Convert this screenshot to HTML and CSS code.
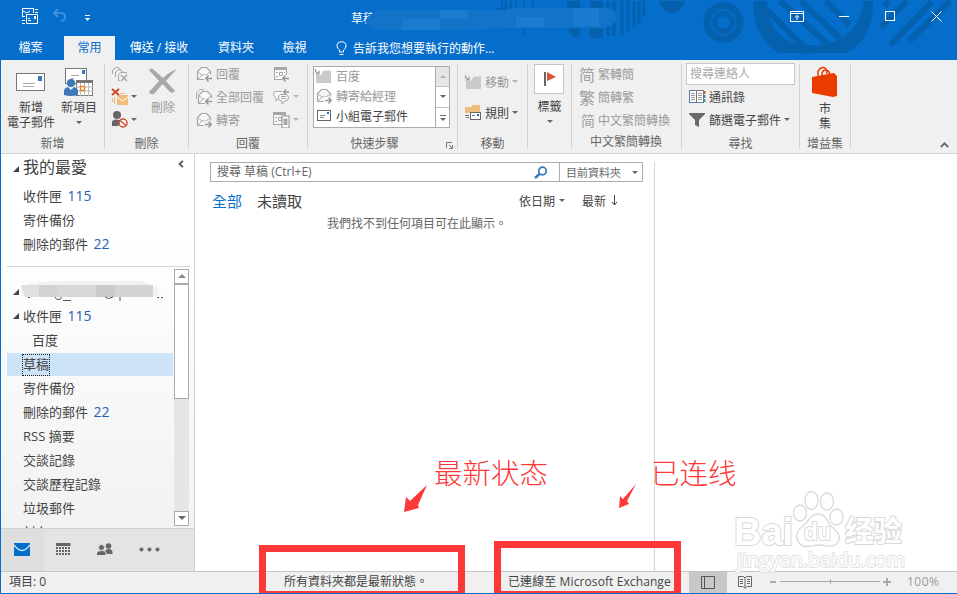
FILE: index.html
```html
<!DOCTYPE html>
<html lang="zh-Hant">
<head>
    <meta charset="UTF-8">
    <meta name="viewport" content="width=device-width, initial-scale=1.0">
    <title>草稿 - Outlook</title>
    <link rel="stylesheet" href="styles.css">
</head>
<body>
    <!-- shared icons -->
    <svg class="defs" width="0" height="0">
        <symbol id="i-open-mail" viewBox="0 0 18 16">
            <path d="M8 13.500H1.500V5.500L5.500 1.500H10.500L14.500 5.500V8.500" fill="#f8f8f8" stroke="#a6a6a6" stroke-width="1.200"/>
            <path d="M1.500 5.500L6 9H10L14.500 5.500M2 13L6 9" fill="none" stroke="#b0b0b0"/>
        </symbol>
        <symbol id="i-back" viewBox="0 0 7 7"><path d="M7 3.500H1M3.500 .5L.8 3.500 3.500 6.500" fill="none" stroke="#999" stroke-width="1.5"/></symbol>
        <symbol id="i-folder" viewBox="0 0 18 16">
            <path d="M2 7L7 7 9 3.500 10 2.500H17V15H2Z" fill="#c9c9c9"/>
            <path d="M1.500 1V3.500L5 6M5 2.500V6H1.500" fill="none" stroke="#9a9a9a" stroke-width="1.2"/>
        </symbol>
        <symbol id="i-cal" viewBox="0 0 16 14">
            <rect x=".5" y=".5" width="12" height="12" fill="#f8f8f8" stroke="#a6a6a6"/>
            <rect x="0" y="0" width="13" height="3" fill="#a6a6a6"/>
            <path d="M2 5.500H4M2 9.500H4M10 5.500H11M5.500 5.500H8.500V8.500H5.500Z" fill="none" stroke="#a6a6a6"/>
        </symbol>
    </svg>

    <div class="window">
        <header class="top">
            <svg class="art" width="957" height="60" viewBox="0 0 957 60">
                <g fill="none" stroke="#0560ae">
                    <path d="M502 1V15M506 1V15M511 1V15M516 1V18M524 1V34M533 1V15" stroke-width="2"/>
                    <path d="M567 1H580V37H573Q567 30 567 20Z" fill="#0560ae" stroke="none"/>
                    <path d="M590 1H603V38H590ZM497 8H505V23H497Z" fill="#0560ae" stroke="none"/>
                    <path d="M608 1V36M614 1V36M622 1V34M628 1V31M634 1V27M639 1V23M644 1V16" stroke-width="3"/>
                    <path d="M659 1Q663 13 672 13T685 1Z" fill="#0560ae" stroke="none"/>
                    <circle cx="723.500" cy="22.500" r="16.500" stroke-width="7"/>
                    <circle cx="723.500" cy="22.500" r="9" stroke-width="5"/>
                    <path d="M753 1H767Q767 26 785 39L779 53Q753 38 753 1Z" fill="#0560ae" stroke="none"/>
                    <path d="M864 1H873Q874 37 847 53H779L785 39Q806 49 831 43Q861 32 864 1Z" fill="#0560ae" stroke="none"/>
                    <path d="M758 1L810 53M780 1L832 48M801 1L840 38M826 1L850 25" stroke-width="6"/>
                    <path d="M890 45L932 2M909 41L950 1M881 27L907 1M884 6L889 1" stroke-width="6"/>
                </g>
            </svg>

            <div class="titlebar">
                <div class="quick-access">
                    <svg width="18" height="18" viewBox="0 0 18 18" fill="none" stroke="#fff">
                        <path d="M1 1.500H12M1.500 1V9M1 9.500H4M12.500 1V6M14 2.500H17M14 5.500H17M1 13.500H4M1 16.500H4M2 4L6 6 9 4"/>
                        <path d="M5.500 7.500H16.500V16.500H5.500ZM7 13.500H10M7 11.500H9"/><path d="M13 9H15V12H13Z" fill="#fff" stroke="none"/>
                    </svg>
                    <svg class="undo" width="15" height="14" viewBox="0 0 15 14" fill="none" stroke="#3d8fdc" stroke-width="2">
                        <path d="M6 1L2 5 6 9M2 5H9Q13 5 13 9T9 13"/>
                    </svg>
                    <svg class="customize" width="7" height="6" viewBox="0 0 7 6"><path d="M1 .5H6" stroke="#fff"/><path d="M1 3H6L3.500 6Z" fill="#fff"/></svg>
                </div>
                <span class="title">草稿</span>
                <!-- redacted account name -->
                <svg class="smudge" width="252" height="22" viewBox="0 0 252 22">
                    <path d="M12 2H108Q138 3 153 0H238Q251 -1 252 8T238 20H138Q118 22 98 22H16Q4 19 1 15T12 2Z" fill="#1273c9"/>
                    <path d="M37 11H75V22H37ZM75 2H103V11H75ZM151 9H179V19H151ZM208 0H234V18H208Z" fill="#1b7bd0"/>
                </svg>
                <div class="window-buttons">
                    <svg width="14" height="11" viewBox="0 0 14 11" fill="none" stroke="#fff"><path d="M.5 .5H13.500V10.500H.5ZM.5 2.500H13.500M7 9V4.500M4.800 6.500L7 4.500 9.200 6.500"/></svg>
                    <svg width="11" height="11" viewBox="0 0 11 11" stroke="#fff"><path d="M0 5.500H10"/></svg>
                    <svg width="11" height="11" viewBox="0 0 11 11" fill="none" stroke="#fff"><rect x=".5" y=".5" width="9" height="9"/></svg>
                    <svg width="11" height="11" viewBox="0 0 11 11" stroke="#fff"><path d="M.5 .5L10.500 10.500M10.500 .5L.5 10.500"/></svg>
                </div>
            </div>

            <nav class="tabs">
                <a class="tab file">檔案</a>
                <a class="tab active">常用</a>
                <a class="tab send">傳送 / 接收</a>
                <a class="tab folder">資料夾</a>
                <a class="tab view">檢視</a>
                <a class="tell-me">
                    <svg width="11" height="15" viewBox="0 0 11 15" fill="none" stroke="#fff"><path d="M3.500 11V9Q1 7.500 1 5Q1 .8 5.500 .8T10 5Q10 7.500 7.500 9V11ZM3.500 13.500H7.500"/></svg>
                    告訴我您想要執行的動作...
                </a>
            </nav>
        </header>

        <section class="ribbon">
            <div class="group g-new">
                <div class="group-body">
                    <div class="big new-mail">
                        <svg width="30" height="30" viewBox="0 0 30 30"><rect x=".5" y="9.500" width="28" height="17" fill="#fff" stroke="#777"/><rect x="22" y="12" width="4" height="5" fill="#3e78b8"/><path d="M7 19.500H19M7 22.500H18" stroke="#aaa"/></svg>
                        <span>新增<br>電子郵件</span>
                    </div>
                    <div class="big new-item">
                        <svg width="30" height="32" viewBox="0 0 30 32">
                            <rect x="1.500" y="4.500" width="21" height="15" fill="#fff" stroke="#777"/><path d="M18 6H21V10H18Z" fill="#3e78b8"/><path d="M7 11.500H15M7 14.500H10" stroke="#aaa"/>
                            <rect x="12.500" y="16.500" width="16" height="15" fill="#fff" stroke="#777"/><path d="M12 16H29V19H12Z" fill="#777"/><path d="M16.500 19V32M20.500 19V32M24.500 19V32M12 23H29M12 27H29" stroke="#bbb"/>
                            <rect x="16.500" y="22.500" width="4" height="4" fill="#fff" stroke="#e38b2c" stroke-width="1.5"/>
                            <circle cx="7" cy="19" r="4" fill="#3e78b8"/><path d="M0 31V27Q0 24 4 23L7 26 10 23Q14 24 14 27V31Q7 33 0 31Z" fill="#3e78b8"/>
                        </svg>
                        <span>新項目</span>
                        <i class="caret"></i>
                    </div>
                </div>
                <div class="group-label">新增</div>
            </div>

            <div class="group g-delete">
                <div class="group-body">
                    <div class="stack">
                        <div class="row"><svg width="18" height="16" viewBox="0 0 18 16" fill="none" stroke="#aaa"><path d="M1.500 8V4L5 1.500H7L10 4M4.500 11V6L8 3.500 12 6M9 14.500H7.500V8.500L10 6.500H15.500V8"/><path d="M10 9L16 15M16 9L10 15" stroke-width="1.700"/></svg></div>
                        <div class="row">
                            <svg width="18" height="17" viewBox="0 0 18 17"><path d="M6 7H17V17H6Z" fill="#f0bd7c"/><path d="M6 9L11.500 13 17 9" stroke="#fff" fill="none"/><path d="M1.500 10V14M3.500 9V16M9 5.500H14" stroke="#e8b880"/><path d="M1 1L8 7M8 1L1 7" stroke="#cf4a2b" stroke-width="2"/></svg>
                            <i class="caret"></i>
                        </div>
                        <div class="row">
                            <svg width="18" height="17" viewBox="0 0 18 17"><circle cx="6" cy="4" r="4" fill="#666"/><path d="M1 15V11Q1 9 5 8.500Q9 8.500 10 10L7 15Z" fill="#666"/><circle cx="12" cy="12" r="4" fill="#fff" stroke="#cf4a2b" stroke-width="1.500"/><path d="M9 9.500L15 14.500" stroke="#cf4a2b" stroke-width="1.500"/></svg>
                            <i class="caret"></i>
                        </div>
                    </div>
                    <div class="big delete disabled">
                        <svg width="30" height="32" viewBox="0 0 30 32"><path d="M1 6Q3 3 6 6L15 14Q21 8 29 5Q23 11 18 17L27 27Q25 30 22 28L14.500 20 6 30Q2 31 1 28L11 17Z" fill="#a8a8a8"/></svg>
                        <span>刪除</span>
                    </div>
                </div>
                <div class="group-label">刪除</div>
            </div>

            <div class="group g-reply">
                <div class="group-body disabled">
                    <div class="stack replies">
                        <div class="row"><svg width="17" height="16" viewBox="0 0 17 16"><use href="#i-open-mail" width="18" height="16"/><path d="M8 9H17V16H8Z" fill="#f0f0f0"/><use href="#i-back" x="9" y="9" width="7" height="7"/></svg>回覆</div>
                        <div class="row"><svg width="17" height="16" viewBox="0 0 17 16"><path d="M.5 10V4L4 .5H8" fill="none" stroke="#aaa"/><use href="#i-open-mail" x="1" y="1" width="18" height="16"/><path d="M9 9H17V16H9Z" fill="#f0f0f0"/><use href="#i-back" x="9" y="9" width="7" height="7"/></svg>全部回覆</div>
                        <div class="row"><svg width="17" height="16" viewBox="0 0 17 16"><use href="#i-open-mail" width="18" height="16"/><path d="M8 9H17V16H8Z" fill="#f0f0f0"/><use href="#i-back" x="-16" y="9" width="7" height="7" transform="scale(-1 1)"/></svg>轉寄</div>
                    </div>
                    <div class="stack">
                        <div class="row"><svg width="17" height="16" viewBox="0 0 17 16"><use href="#i-cal" x="1" y="1" width="16" height="14"/><path d="M9 9H16V16H9Z" fill="#f0f0f0"/><use href="#i-back" x="9" y="9" width="7" height="7"/></svg></div>
                        <div class="row"><svg width="17" height="16" viewBox="0 0 17 16" fill="#f8f8f8" stroke="#a6a6a6"><path d="M9 2.500H3Q.5 2.500 .5 5T3 9V12L6 9"/><path d="M7 5.500H13Q15.500 6 15.500 9T12 12L9 15V12Q5.500 12 5.500 9T7 5.500ZM8 7.500H13M8 9.500H13"/><use href="#i-back" x="10" y="0" width="6" height="6"/></svg><i class="caret"></i></div>
                        <div class="row"><svg width="17" height="16" viewBox="0 0 17 16"><use href="#i-cal" width="16" height="14"/><rect x="9" y="4" width="7" height="12" fill="#fff" stroke="#8a8a8a"/><path d="M10.500 6.500H14.500V13H10.500Z" fill="#a6a6a6"/></svg><i class="caret"></i></div>
                    </div>
                </div>
                <div class="group-label">回覆</div>
            </div>

            <div class="group g-steps">
                <div class="group-body">
                    <div class="gallery">
                        <div class="gallery-list">
                            <div class="row disabled"><svg width="18" height="16"><use href="#i-folder"/></svg>百度</div>
                            <div class="row disabled"><svg width="18" height="16" viewBox="0 0 18 16"><use href="#i-open-mail" x="2" width="18" height="16"/><path d="M10 9H18V16H10Z" fill="#fff"/><use href="#i-back" x="-18" y="9" width="7" height="7" transform="scale(-1 1)"/></svg>轉寄給經理</div>
                            <div class="row"><svg width="18" height="16" viewBox="0 0 18 16"><rect x="3.500" y="2.500" width="13" height="10" fill="#fff" stroke="#666"/><path d="M13 4H15V6H13Z" fill="#2f6fb5"/><path d="M6 7.500H11M6 9.500H10" stroke="#888"/></svg>小組電子郵件</div>
                        </div>
                        <div class="gallery-scroll">
                            <span class="off"><i class="caret up"></i></span>
                            <span><i class="caret"></i></span>
                            <span><i class="caret lined"></i></span>
                        </div>
                    </div>
                </div>
                <div class="group-label">快速步驟
                    <svg class="launcher" width="7" height="7" viewBox="0 0 7 7" fill="none" stroke="#777"><path d="M.5 6V.5H6M3 3L6 6M6.500 3V6.500H3"/></svg>
                </div>
            </div>

            <div class="group g-move">
                <div class="group-body">
                    <div class="row disabled"><svg width="18" height="16"><use href="#i-folder"/></svg>移動<i class="caret"></i></div>
                    <div class="row"><svg width="18" height="18" viewBox="0 0 18 18"><path d="M1 3H7L9 1H16V9H1Z" fill="#f0bd7c"/><rect x="6.500" y="8.500" width="10" height="7" fill="#fff" stroke="#666"/><path d="M13 10H15V12H13Z" fill="#2f6fb5"/><path d="M8 11.500H11M1 11.500H5M2 13.500H5" stroke="#777"/></svg>規則<i class="caret"></i></div>
                </div>
                <div class="group-label">移動</div>
            </div>

            <div class="group g-tags">
                <div class="group-body">
                    <div class="flag"><svg width="16" height="18" viewBox="0 0 16 18"><path d="M4 2V16" stroke="#666" stroke-width="2"/><path d="M6 2L15 7 6 11Z" fill="#d9542f"/></svg></div>
                    <span>標籤</span>
                    <i class="caret"></i>
                </div>
            </div>

            <div class="group g-convert">
                <div class="group-body stack disabled">
                    <div class="row"><b class="glyph" lang="zh-Hans">简</b>繁轉簡</div>
                    <div class="row"><b class="glyph">繁</b>簡轉繁</div>
                    <div class="row"><b class="glyph small" lang="zh-Hans">简</b>中文繁簡轉換</div>
                </div>
                <div class="group-label">中文繁簡轉換</div>
            </div>

            <div class="group g-find">
                <div class="group-body">
                    <div class="people-search">搜尋連絡人</div>
                    <div class="row"><svg width="17" height="14" viewBox="0 0 17 14"><path d="M.5 .5H7.500V12.500H.5ZM7.500 .5H14.500V12.500H7.500Z" fill="#fff" stroke="#777"/><path d="M.5 0V13M0 12.500H15" stroke="#4d7fb5"/><path d="M2 3.500H6M2 5.500H6M2 7.500H6M2 9.500H6M9 3.500H13M9 5.500H13M9 7.500H13M9 9.500H13" stroke="#999"/><path d="M15.500 1V4" stroke="#d9542f" stroke-width="2"/><path d="M15.500 5V8" stroke="#4d7fb5" stroke-width="2"/><path d="M15.500 9V12" stroke="#4a9c6b" stroke-width="2"/></svg>通訊錄</div>
                    <div class="row"><svg width="17" height="14" viewBox="0 0 17 14"><path d="M0 0H16V1L10 7V14L6 12V7L0 1Z" fill="#6a6a6a"/></svg>篩選電子郵件<i class="caret"></i></div>
                </div>
                <div class="group-label">尋找</div>
            </div>

            <div class="group g-store">
                <div class="group-body">
                    <svg width="26" height="32" viewBox="0 0 26 32"><path d="M6 11V6Q7 2 11 1.500T15 8M10 10V7Q11 3.500 14 4T18 8" fill="none" stroke="#eb3c00" stroke-width="1.500"/><path d="M0 11L22 7 25 10V30L21 31 0 27Z" fill="#eb3c00"/></svg>
                    <span>市<br>集</span>
                </div>
                <div class="group-label">增益集</div>
            </div>

            <svg class="collapse" width="9" height="6" viewBox="0 0 9 6" fill="none" stroke="#666" stroke-width="1.800"><path d="M.8 5L4.500 1.300 8.200 5"/></svg>
        </section>

        <main class="content">
            <aside class="sidebar">
                <svg class="minimize" width="6" height="8" viewBox="0 0 6 8" fill="none" stroke="#555" stroke-width="1.800"><path d="M5 .8L1.500 4 5 7.200"/></svg>
                <h2 class="favorites-title"><i class="twisty"></i>我的最愛</h2>
                <ul class="folders favorites">
                    <li>收件匣 <em>115</em></li>
                    <li>寄件備份</li>
                    <li>刪除的郵件 <em>22</em></li>
                </ul>
                <div class="tree">
                    <ul class="folders">
                        <li class="account"><i class="twisty"></i>
                            <svg width="146" height="24" viewBox="0 0 146 24">
                                <path d="M6 4L30 1 120 1 136 6 138 16H0L-2 12Z" fill="#f2f2f2"/>
                                <path d="M0 5H18V17H4Z" fill="#e0e0e0"/><path d="M18 5H36V17H18Z" fill="#d2d2d2"/><path d="M36 5H75V17H36Z" fill="#d8d8d8"/><path d="M75 5H94V17H75Z" fill="#cacaca"/><path d="M94 5H132V17H94Z" fill="#d4d4d4"/>
                                <path d="M34 17Q35 20 38 19.500T40 17M42 20.500H50M84 17Q87 20 92 17M99 17V21M7 17.500H9M136 17.500H138M140 17.500H142" fill="none" stroke="#555"/>
                            </svg>
                        </li>
                        <li><i class="twisty"></i>收件匣 <em>115</em></li>
                        <li class="child">百度</li>
                        <li class="selected"><span>草稿</span></li>
                        <li>寄件備份</li>
                        <li>刪除的郵件 <em>22</em></li>
                        <li>RSS 摘要</li>
                        <li>交談記錄</li>
                        <li>交談歷程記錄</li>
                        <li>垃圾郵件</li>
                        <li>封存</li>
                    </ul>
                    <div class="scrollbar">
                        <span class="arrow"><i class="caret up"></i></span>
                        <span class="thumb"></span>
                        <span class="track"></span>
                        <span class="arrow"><i class="caret"></i></span>
                    </div>
                </div>
                <nav class="modules">
                    <svg width="16" height="13" viewBox="0 0 16 13"><path d="M0 0H16V13H0Z" fill="#056ecb"/><path d="M0 2Q8 13 16 2" fill="none" stroke="#dcecf8" stroke-width="1.300"/></svg>
                    <svg width="15" height="13" viewBox="0 0 15 13"><path d="M0 1.500H14.500" stroke="#666" stroke-width="3"/><path d="M0 5H14M0 8H14M0 11H14" stroke="#666" stroke-width="2" stroke-dasharray="2 1"/></svg>
                    <svg width="16" height="13" viewBox="0 0 16 13" fill="#666"><circle cx="11.500" cy="3" r="2.800"/><path d="M8 11V8Q9 6 12 6T15.500 9V11Z"/><g stroke="#e4e4e4"><circle cx="4.500" cy="4.500" r="3"/><path d="M-.5 12.500V10Q0 7.500 4.500 7.500T9 10V12.500Z"/></g></svg>
                    <svg width="21" height="5" viewBox="0 0 21 5" fill="#666"><circle cx="2.500" cy="2.500" r="2"/><circle cx="10.500" cy="2.500" r="2"/><circle cx="18.500" cy="2.500" r="2"/></svg>
                </nav>
            </aside>

            <section class="mail-list">
                <div class="search">
                    <span class="search-input">搜尋 草稿 (Ctrl+E)</span>
                    <svg width="14" height="13" viewBox="0 0 14 13" fill="none" stroke="#3a78bd"><circle cx="8.500" cy="5" r="3.800" stroke-width="1.700"/><path d="M5.500 8L1 12" stroke-width="2.500"/></svg>
                    <span class="scope">目前資料夾<i class="caret"></i></span>
                </div>
                <div class="filters">
                    <a class="all">全部</a>
                    <a class="unread">未讀取</a>
                    <span class="sort">依日期<i class="caret"></i></span>
                    <span class="order">最新<svg width="7" height="11" viewBox="0 0 7 11" fill="none" stroke="#444"><path d="M3.500 0V10M1 7L3.500 10 6 7"/></svg></span>
                </div>
                <p class="empty">我們找不到任何項目可在此顯示。</p>
            </section>
            <section class="reading-pane"></section>
        </main>

        <footer class="status">
            <span class="count">項目: 0</span>
            <span class="sync">所有資料夾都是最新狀態。</span>
            <span class="connected">已連線至 Microsoft Exchange</span>
            <span class="view-normal"><svg width="14" height="13" viewBox="0 0 14 13" fill="none" stroke="#555"><path d="M.5 .5H13.500V12.500H.5ZM3.500 .5V12.500"/></svg></span>
            <svg class="view-read" width="14" height="13" viewBox="0 0 14 13" fill="none" stroke="#666"><path d="M.5 .5H5.500L7 2 8.500 .5H13.500V10.500H9L7 12.500 5 10.500H.5ZM7 2V12M2 3.500H5M2 5.500H5M2 7.500H5M9 3.500H12M9 5.500H12M9 7.500H12"/></svg>
            <svg class="zoom" width="122" height="11" viewBox="0 0 122 11" stroke="#aaa"><path d="M0 5H6M113 5H121M117 1V9" stroke-width="2"/><path d="M10 4.500H110M60.500 2V7"/></svg>
            <span class="percent">100%</span>
        </footer>

        <!-- watermark and callouts over the window -->
        <svg class="watermark" width="180" height="90" viewBox="0 0 180 90">
            <g class="paw">
                <ellipse cx="80.500" cy="16.500" rx="6.500" ry="9"/><ellipse cx="96" cy="17.500" rx="6.500" ry="8.500"/>
                <ellipse cx="69" cy="29" rx="6.500" ry="8"/><ellipse cx="105.500" cy="33" rx="6.500" ry="8"/>
                <path d="M87 30C79 30 77 39 71 43C65 47 64 54 69 60C74 65 81 61 88 61S103 65 107 58C111 50 104 46 99 41C96 36 94 30 87 30Z"/>
            </g>
            <text class="wm-latin" x="3" y="61" textLength="59" lengthAdjust="spacingAndGlyphs">Bai</text>
            <text class="wm-du" x="73" y="56" textLength="27" lengthAdjust="spacingAndGlyphs">du</text>
            <text class="wm-cjk" x="114" y="58" textLength="57" lengthAdjust="spacingAndGlyphs" lang="zh-Hans">经验</text>
            <text class="wm-url" x="6" y="83" textLength="168" lengthAdjust="spacingAndGlyphs">jingyan.baidu.com</text>
        </svg>
        <span class="note note-sync" lang="zh-Hans">最新状态</span>
        <span class="note note-connected" lang="zh-Hans">已连线</span>
        <svg class="pointer pointer-sync" width="24" height="29" viewBox="0 0 24 29"><path d="M23 1L14 21 15 24 0 28 2 13 6 17Z" fill="#fc3838"/></svg>
        <svg class="pointer pointer-connected" width="18" height="25" viewBox="0 0 18 25"><path d="M17 0L8 17 10 20 0 24 1 12 4 15Z" fill="#fc3838"/></svg>
        <div class="frame frame-sync"></div>
        <div class="frame frame-connected"></div>
    </div>
</body>
</html>
```
FILE: styles.css
```css
* {
    box-sizing: border-box;
}
body {
    margin: 0;
    font-family: "Open Sans", "Noto Sans CJK TC", sans-serif;
    font-size: 12px;
    color: #444;
}
svg {
    display: block;
    flex: none;
}
.defs {
    position: absolute;
}
.window {
    position: relative;
    width: 957px;
    height: 594px;
    overflow: hidden;
    display: flex;
    flex-direction: column;
    background: #fff;
    border-left: 1px solid #056ecb;
    border-bottom: 1px solid #056ecb;
}

/* title bar and tabs */
.top {
    position: relative;
    height: 60px;
    flex: none;
    background: #056ecb;
    color: #fff;
}
.art {
    position: absolute;
    left: -1px;
    top: 0;
}
.titlebar, .tabs {
    position: relative;
    display: flex;
}
.titlebar {
    height: 36px;
    align-items: center;
}
.quick-access {
    display: flex;
    align-items: center;
    width: 350px;
    padding: 0 0 4px 20px;
}
.quick-access .undo {
    margin: 0 17px 2px 13px;
}
.quick-access .customize {
    margin-top: 3px;
}
.title {
    height: 18px;
    line-height: 19px;
    white-space: nowrap;
}
.smudge {
    position: absolute;
    left: 364px;
    top: 8px;
}
.window-buttons {
    display: flex;
    align-items: center;
    margin-left: auto;
    padding: 0 15px 4px 0;
    gap: 35px;
}
.tabs {
    height: 24px;
    line-height: 23px;
}
.tab {
    text-align: center;
}
.tab.file {
    width: 63px;
    padding-right: 4px;
}
.tab.active {
    width: 51px;
    background: #f0f0f0;
    color: #056ecb;
}
.tab.send {
    width: 88px;
}
.tab.folder {
    width: 66px;
}
.tab.view {
    width: 51px;
}
.tell-me {
    display: flex;
    align-items: center;
    gap: 6px;
    padding-left: 16px;
}

/* ribbon */
.ribbon {
    position: relative;
    display: flex;
    flex: none;
    height: 94px;
    padding: 4px 0;
    background: #f0f0f0;
    border-bottom: 1px solid #d4d4d4;
}
.group {
    display: flex;
    flex-direction: column;
    height: 85px;
    border-right: 1px solid #d2d2d2;
    white-space: nowrap;
}
.group-body {
    display: flex;
    height: 71px;
}
.group-label {
    position: relative;
    height: 14px;
    line-height: 17px;
    text-align: center;
    color: #666;
}
.disabled {
    color: #9a9a9a;
}
.stack {
    display: flex;
    flex-direction: column;
    margin-top: -2px;
}
.row {
    display: flex;
    align-items: center;
    height: 23px;
    gap: 3px;
}
.caret {
    flex: none;
    width: 0;
    height: 0;
    border: 3px solid transparent;
    border-top-color: #666;
    border-bottom-width: 0;
}
.disabled .caret {
    border-top-color: #b5b5b5;
}
.caret.up {
    border-top-width: 0;
    border-bottom: 3px solid #888;
}
.big {
    display: flex;
    flex-direction: column;
    align-items: center;
    line-height: 15px;
    text-align: center;
}
.big span {
    margin-top: 4px;
}
.g-new {
    width: 104px;
}
.new-mail {
    width: 60px;
}
.new-mail span {
    margin-top: 6px;
}
.new-item {
    width: 36px;
}
.new-item .caret {
    margin-top: 6px;
}
.g-delete {
    width: 84px;
}
.g-delete .stack {
    width: 38px;
    padding-left: 6px;
}
.g-delete .row {
    gap: 2px;
}
.delete {
    width: 40px;
}
.g-reply {
    width: 119px;
}
.replies {
    width: 76px;
    padding-left: 7px;
}
.g-reply .stack + .stack {
    padding-left: 8px;
}
.g-steps {
    width: 150px;
}
.gallery {
    display: flex;
    width: 137px;
    height: 62px;
    margin: 2px 0 0 5px;
    background: #fff;
    border: 1px solid #ababab;
}
.gallery-list {
    flex: 1;
}
.gallery-list .row {
    height: 20px;
    gap: 4px;
    line-height: 18px;
}
.gallery-list svg {
    margin-bottom: 2px;
}
.gallery-scroll {
    display: flex;
    flex-direction: column;
    width: 14px;
    border-left: 1px solid #ababab;
}
.gallery-scroll span {
    display: flex;
    flex: 1;
    align-items: center;
    justify-content: center;
}
.gallery-scroll span + span {
    border-top: 1px solid #c0c0c0;
}
.gallery-scroll .off {
    background: #e6e6e6;
}
.gallery-scroll .off .caret {
    border-bottom-color: #b0b0b0;
}
.caret.lined {
    position: relative;
    top: 2px;
}
.caret.lined::before {
    content: "";
    position: absolute;
    left: -3px;
    top: -6px;
    width: 6px;
    height: 1px;
    background: #666;
}
.launcher {
    position: absolute;
    right: 4px;
    bottom: 0;
}
.g-steps .group-label {
    padding-right: 16px;
}
.g-move {
    width: 70px;
}
.g-move .group-body {
    flex-direction: column;
    gap: 8px;
    padding: 6px 0 0 6px;
}
.g-tags {
    width: 44px;
}
.g-tags .group-body {
    flex-direction: column;
    align-items: center;
}
.flag {
    display: flex;
    align-items: center;
    justify-content: center;
    width: 30px;
    height: 30px;
    margin: 0 1px 3px 0;
    background: #fff;
    border: 1px solid #c6c6c6;
}
.g-tags .caret {
    margin-top: 5px;
}
.g-convert {
    width: 110px;
    padding-left: 7px;
}
.g-convert .group-label {
    padding-right: 8px;
}
.glyph {
    width: 16px;
    font-size: 16px;
    font-weight: 400;
    color: #a0a0a0;
}
.glyph.small {
    font-size: 14px;
    text-align: right;
}
.g-find {
    width: 118px;
}
.g-find .group-body {
    flex-direction: column;
    padding-left: 4px;
}
.g-find .row {
    padding-left: 3px;
}
.people-search {
    width: 109px;
    height: 22px;
    margin-top: -1px;
    padding-left: 3px;
    line-height: 19px;
    background: #fff;
    border: 1px solid #c6c6c6;
    color: #aaa;
}
.g-store {
    width: 51px;
}
.g-store .group-body {
    flex-direction: column;
    align-items: center;
    line-height: 15px;
    padding-top: 2px;
}
.g-store span {
    margin-top: 3px;
}
.collapse {
    position: absolute;
    right: 8px;
    bottom: 5px;
}

/* folder pane */
.content {
    display: flex;
    flex: none;
    height: 417px;
}
.sidebar {
    position: relative;
    display: flex;
    flex-direction: column;
    width: 194px;
    background: linear-gradient(#fff 20%, #f0f0f0);
    border-right: 1px solid #d4d4d4;
}
.minimize {
    position: absolute;
    right: 10px;
    top: 6px;
}
.favorites-title {
    position: relative;
    margin: 0;
    padding-left: 22px;
    height: 30px;
    line-height: 26px;
    font-size: 16px;
    font-weight: 400;
}
.twisty {
    position: absolute;
    left: 12px;
    top: 9px;
    border: 3px solid #444;
    border-top-color: transparent;
    border-left-color: transparent;
}
.favorites-title .twisty {
    top: 12px;
}
.folders {
    list-style: none;
    margin: 0;
    padding: 0;
    font-size: 13px;
}
.folders li {
    position: relative;
    height: 24px;
    line-height: 24px;
    padding-left: 16px;
}
.folders .twisty {
    left: 6px;
}
.folders em {
    margin-left: 2px;
    font-style: normal;
    font-size: 14px;
    line-height: 20px;
    color: #1e62b0;
}
.favorites {
    margin: 0 4px 10px 6px;
    padding-bottom: 10px;
    border-bottom: 1px solid #d4d4d4;
    height: 83px;
}
.tree {
    display: flex;
    height: 261px;
    margin: -8px 5px 0 6px;
    overflow: hidden;
}
.tree .folders {
    width: 166px;
    padding-top: 11px;
}
.folders .account {
    padding-left: 14px;
}
.folders .child {
    padding-left: 25px;
}
.folders .selected {
    background: linear-gradient(transparent 1px, #cde3f8 1px);
}
.selected span {
    display: inline-block;
    height: 20px;
    line-height: 19px;
    outline: 1px dotted #222;
}
.scrollbar {
    display: flex;
    flex-direction: column;
    width: 15px;
    margin-left: 1px;
    height: 257px;
}
.arrow {
    display: flex;
    align-items: center;
    justify-content: center;
    height: 15px;
    flex: none;
    background: #fff;
    border: 1px solid #ababab;
}
.arrow .caret {
    border-width: 4px 4px 0;
}
.arrow .caret.up {
    border-width: 0 4px 4px;
}
.thumb {
    height: 115px;
    background: #fff;
    border: 1px solid #ababab;
}
.track {
    flex: 1;
    background: #e6e6e6;
}
.modules {
    display: flex;
    align-items: center;
    height: 43px;
    margin-top: auto;
    padding: 0 0 1px 13px;
    gap: 26px;
    background: linear-gradient(90deg, #dfdfdf 43px, #e4e4e4 43px);
    border-top: 1px solid #d0d0d0;
}

/* message list */
.mail-list {
    width: 460px;
    margin-top: 8px;
    padding-left: 15px;
    border-right: 1px solid #d4d4d4;
}
.search {
    display: flex;
    align-items: center;
    width: 433px;
    height: 20px;
    border: 1px solid #ababab;
    color: #666;
}
.search-input {
    flex: 1;
    padding: 0 0 2px 6px;
}
.scope {
    display: flex;
    align-items: center;
    justify-content: space-between;
    width: 83px;
    height: 18px;
    margin-left: 11px;
    padding: 0 4px 0 6px;
    border-left: 1px solid #ababab;
    font-size: 11px;
}
.filters {
    display: flex;
    align-items: center;
    height: 36px;
    padding: 0 0 0 2px;
}
.all, .unread {
    font-size: 15px;
}
.all {
    width: 45px;
    color: #056ecb;
}
.sort, .order {
    display: flex;
    align-items: center;
    padding-top: 1px;
}
.sort {
    gap: 4px;
    margin-left: auto;
    margin-right: 17px;
}
.order {
    gap: 5px;
    margin-right: 36px;
}
.empty {
    margin: 0;
    padding-left: 117px;
    line-height: 11px;
    color: #666;
}

/* status bar */
.status {
    display: flex;
    align-items: center;
    height: 22px;
    flex: none;
    background: #f0f0f0;
    border-top: 1px solid #c6c6c6;
    line-height: 18px;
    white-space: nowrap;
}
.status > span:not(.view-normal) {
    padding-bottom: 1px;
}
.count {
    width: 283px;
    padding-left: 8px;
}
.sync {
    width: 224px;
}
.connected {
    width: 181px;
    letter-spacing: .1px;
}
.view-normal {
    display: flex;
    align-items: center;
    justify-content: center;
    width: 38px;
    height: 22px;
    background: #c8c8c8;
}
.view-read {
    margin: 0 0 1px 11px;
}
.zoom {
    margin-left: 18px;
}
.percent {
    margin-left: 15px;
    letter-spacing: .5px;
    color: #999;
}

/* overlays */
.watermark {
    position: absolute;
    left: 730px;
    top: 484px;
}
.watermark text, .paw {
    fill: #fff;
    stroke: #d9d9d9;
    stroke-width: 1.3px;
}
.watermark text {
    paint-order: stroke;
    stroke-width: 2px;
}
.wm-latin {
    font: bold 38px "Liberation Sans", sans-serif;
}
.wm-du {
    font: bold 24px "Liberation Sans", sans-serif;
}
.wm-cjk {
    font: bold 29px "Noto Sans CJK SC", sans-serif;
}
.watermark .wm-url {
    font: 20px "Open Sans", sans-serif;
    stroke: #e2e2e2;
}
.note {
    position: absolute;
    top: 452px;
    font-family: "Noto Sans CJK SC", sans-serif;
    font-size: 28.5px;
    font-weight: 300;
    line-height: 40px;
    color: #fc3838;
    white-space: nowrap;
}
.note-sync {
    left: 433px;
}
.note-connected {
    left: 650px;
}
.pointer {
    position: absolute;
}
.pointer-sync {
    left: 403px;
    top: 484px;
}
.pointer-connected {
    left: 618px;
    top: 484px;
}
.frame {
    position: absolute;
    border: 7px solid #fc3838;
}
.frame-sync {
    left: 258px;
    top: 545px;
    width: 206px;
    height: 53px;
}
.frame-connected {
    left: 493px;
    top: 541px;
    width: 187px;
    height: 57px;
}
```
